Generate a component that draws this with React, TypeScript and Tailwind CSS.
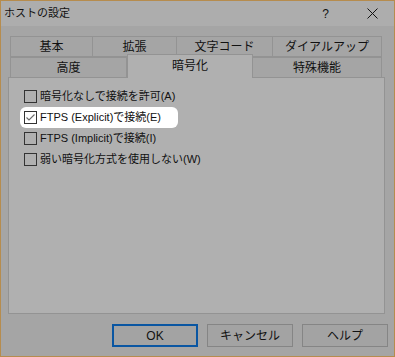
const FONT = "font-['Liberation_Sans','Noto_Sans_CJK_JP',sans-serif]";

type Option = readonly [checked: boolean, label: string];

const OPTIONS: Option[] = [
  [false, '暗号化なしで接続を許可(A)'],
  [true, 'FTPS (Explicit)で接続(E)'],
  [false, 'FTPS (Implicit)で接続(I)'],
  [false, '弱い暗号化方式を使用しない(W)'],
];

function Tab({ label, width }: { label: string; width: string }) {
  return (
    <div
      className={`${width} h-full flex items-center justify-center border-t border-r border-[#939393] first:border-l text-[12px] text-[#111]`}
    >
      {label}
    </div>
  );
}

function Checkbox({ checked }: { checked: boolean }) {
  return (
    <div
      className={`w-[13px] h-[13px] border border-[#333] flex items-center justify-center shrink-0 ${
        checked ? 'bg-white' : 'bg-[#b0b0b0]'
      }`}
    >
      {checked && (
        <svg width="11" height="11" viewBox="0 0 11 11">
          <path d="M1.5 5.5 L4 8 L9.5 2.5" fill="none" stroke="#6a6a6a" strokeWidth="1.1" />
        </svg>
      )}
    </div>
  );
}

export default function App() {
  return (
    <div className={`w-[395px] h-[357px] border border-[#b68c4e] bg-[#a5a5a5] flex flex-col ${FONT}`}>
      {/* title bar */}
      <div className="h-[25px] bg-[#adadad] flex items-center pl-[3px] shrink-0">
        <span className="text-[11px] text-[#111]">ホストの設定</span>
        <span className="ml-auto mr-[38px] text-[12px] text-[#111]">?</span>
        <svg className="mr-[16px]" width="11" height="11" viewBox="0 0 11 11">
          <path d="M0.5 0.5 L10.5 10.5 M10.5 0.5 L0.5 10.5" stroke="#111" strokeWidth="1" />
        </svg>
      </div>

      {/* tabs */}
      <div className="mt-[10px] ml-[9px] w-[372px] flex flex-col">
        <div className="h-[20px] flex">
          <Tab label="基本" width="w-[83px]" />
          <Tab label="拡張" width="w-[84px]" />
          <Tab label="文字コード" width="w-[96px]" />
          <Tab label="ダイアルアップ" width="w-[109px]" />
        </div>
        <div className="h-[21px] flex border-t border-[#939393]">
          <Tab label="高度" width="w-[117px]" />
          <div className="relative z-10 w-[126px] h-[24px] -mt-[3px] bg-[#b0b0b0] border-t border-l border-r border-[#939393] flex items-start justify-center pt-[2px] text-[12px] text-[#111]">
            暗号化
          </div>
          <Tab label="特殊機能" width="w-[129px]" />
        </div>
      </div>

      {/* panel */}
      <div className="ml-[7px] w-[377px] h-[237px] border border-[#939393] bg-[#b0b0b0] pt-[8px] pl-[11px] flex flex-col items-start">
        {OPTIONS.map(([checked, label], i) => (
          <div
            key={i}
            className={`h-[21px] flex items-center gap-[3px] pl-[4px] ${
              checked ? 'bg-white rounded-[6px] w-[158px]' : ''
            }`}
          >
            <Checkbox checked={checked} />
            <span className="text-[11px] text-[#111] whitespace-nowrap">{label}</span>
          </div>
        ))}
      </div>

      {/* buttons */}
      <div className="mt-[10px] flex justify-end gap-[9px] pr-[6px]">
        <button className="w-[86px] h-[23px] border-2 border-[#0a56a2] bg-[#a3a3a3] text-[12px] text-[#111]">
          OK
        </button>
        <button className="w-[86px] h-[23px] border border-[#858585] bg-[#a3a3a3] text-[12px] text-[#111]">
          キャンセル
        </button>
        <button className="w-[86px] h-[23px] border border-[#858585] bg-[#a3a3a3] text-[12px] text-[#111]">
          ヘルプ
        </button>
      </div>
    </div>
  );
}
